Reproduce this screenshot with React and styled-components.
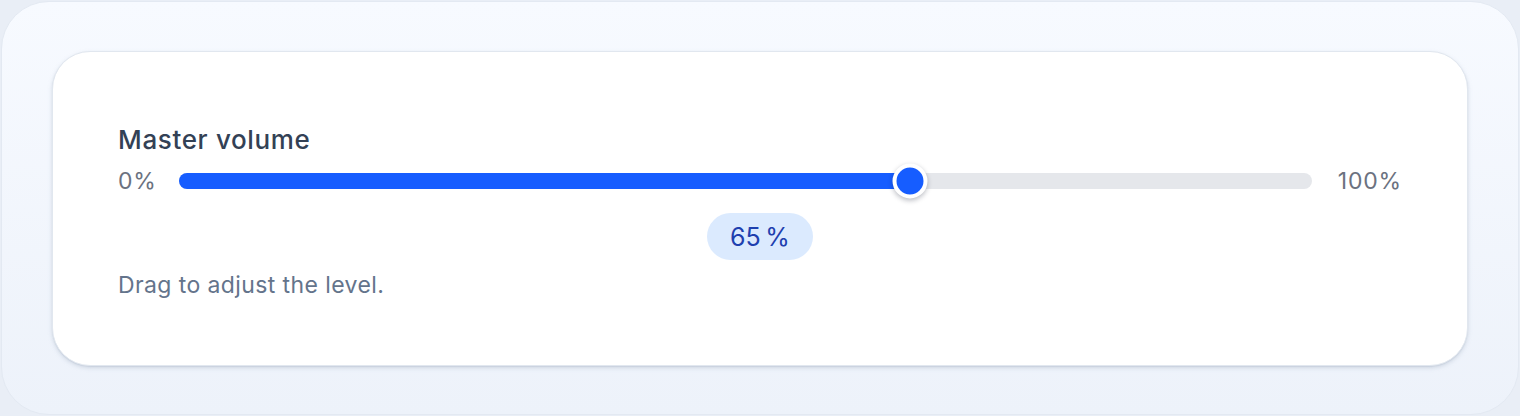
import React, { useState } from "react";
import styled, { createGlobalStyle } from "styled-components";

const Global = createGlobalStyle`
  html, body { margin: 0; padding: 0; background: #e9eef6; }
  body { font-family: Inter, "Noto Sans", "Liberation Sans", sans-serif; -webkit-font-smoothing: antialiased; }
`;

const Shell = styled.div`
  box-sizing: border-box;
  margin: 1px;
  height: 414px;
  padding: 49px 50px;
  border-radius: 48px;
  border: 1px solid #e3e9f2;
  background: linear-gradient(180deg, #f7faff 0%, #edf2fa 100%);
`;

const Card = styled.section`
  box-sizing: border-box;
  height: 315px;
  padding: 68px 65px 64px;
  background: #ffffff;
  border: 1px solid #e1e7ef;
  border-radius: 38px;
  box-shadow: 0 2px 4px rgba(148, 163, 184, 0.35), 0 1px 1px rgba(148, 163, 184, 0.2);
  display: flex;
  flex-direction: column;
`;

const Title = styled.h2`
  margin: 0;
  font-size: 26px;
  line-height: 40px;
  font-weight: 500;
  letter-spacing: 0.65px;
  color: #334155;
`;

const Row = styled.div`
  margin-top: 3px;
  display: grid;
  grid-template-columns: 35px 1fr auto;
  align-items: center;
  column-gap: 26px;
  height: 36px;
`;

const EndLabel = styled.span`
  font-size: 23px;
  letter-spacing: 0.8px;
  color: #6b7280;
  line-height: 1;
`;

const Track = styled.div`
  position: relative;
  height: 16px;
  border-radius: 8px;
  background: #e5e7eb;
`;

const Fill = styled.div`
  height: 100%;
  border-radius: 8px;
  background: #165dff;
`;

const Thumb = styled.div`
  position: absolute;
  top: 50%;
  width: 27px;
  height: 27px;
  border-radius: 50%;
  background: #165dff;
  border: 4px solid #ffffff;
  box-shadow: 0 2px 5px rgba(15, 23, 42, 0.28);
  transform: translate(-50%, -50%);
`;

const BadgeRow = styled.div`
  margin-top: 14px;
  display: flex;
  justify-content: center;
`;

const Badge = styled.div`
  height: 47px;
  width: 106px;
  border-radius: 24px;
  background: #dbeafe;
  color: #1e40af;
  font-size: 25px;
  letter-spacing: 1.2px;
  display: flex;
  align-items: center;
  justify-content: center;
`;

const Help = styled.p`
  margin: 11px 0 0;
  font-size: 23px;
  line-height: 28px;
  letter-spacing: 0.4px;
  color: #64748b;
`;

export default function App() {
  const [value] = useState(65);
  const pos = `calc(17px + (100% - 34px) * ${value / 100})`;
  return (
    <>
      <Global />
      <Shell>
        <Card>
          <Title>Master volume</Title>
          <Row>
            <EndLabel>0%</EndLabel>
            <Track>
              <Fill style={{ width: pos }} />
              <Thumb style={{ left: pos }} />
            </Track>
            <EndLabel>100%</EndLabel>
          </Row>
          <BadgeRow>
            <Badge>{value}{"\u202F"}%</Badge>
          </BadgeRow>
          <Help>Drag to adjust the level.</Help>
        </Card>
      </Shell>
    </>
  );
}
